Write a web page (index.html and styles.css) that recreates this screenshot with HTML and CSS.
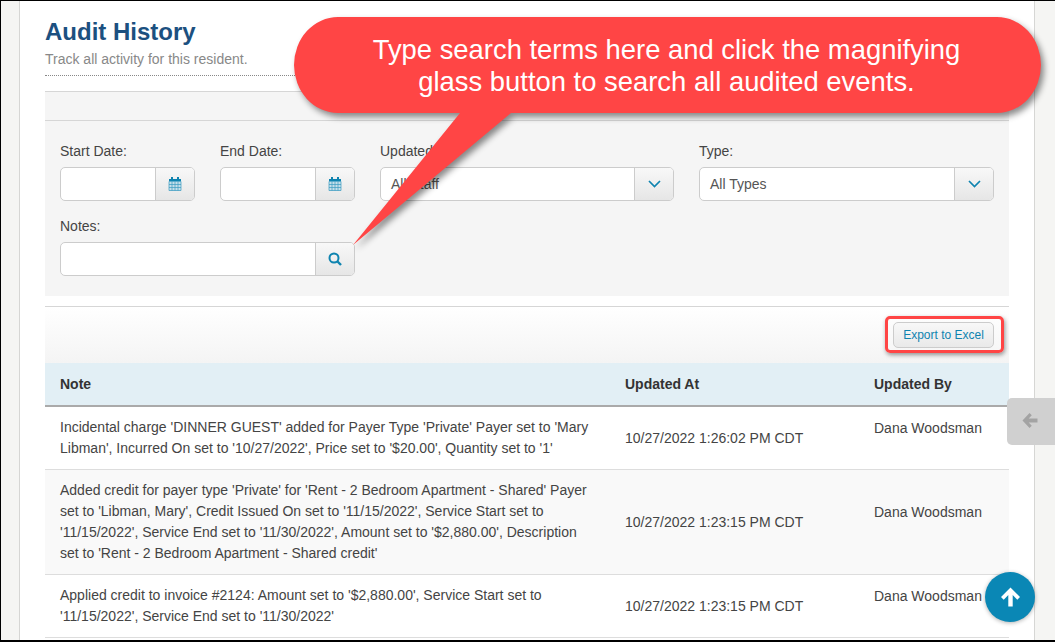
FILE: index.html
```html
<!DOCTYPE html>
<html lang="en">
<head>
  <meta charset="UTF-8">
  <title>Audit History</title>
  <link rel="stylesheet" href="styles.css">
</head>
<body>
  <div class="frame">
    <div class="page">
      <h1>Audit History</h1>
      <p class="subtitle">Track all activity for this resident.</p>
      <div class="dotted"></div>

      <div class="panel">
        <div class="panel-top"></div>
        <div class="filters">
          <div class="field">
            <label>Start Date:</label>
            <div class="input-group">
              <input type="text">
              <span class="addon addon-wide">
                <svg width="14" height="14" viewBox="0 0 14 14"><path d="M3 0h2v2H3zM9 0h2v2H9z" fill="#0f84b0"/><path d="M1 2h12v2H1z" fill="#0f84b0"/><path d="M1 4h12v10H1z" fill="#c5dfea"/><path d="M1 4.500h12V13.500H1zM4 4.500v9M7 4.500v9M10 4.500v9M1 7.500h12M1 10.500h12" fill="none" stroke="#3b9bc0" stroke-width=".7"/></svg>
              </span>
            </div>
          </div>
          <div class="field">
            <label>End Date:</label>
            <div class="input-group">
              <input type="text">
              <span class="addon addon-wide">
                <svg width="14" height="14" viewBox="0 0 14 14"><path d="M3 0h2v2H3zM9 0h2v2H9z" fill="#0f84b0"/><path d="M1 2h12v2H1z" fill="#0f84b0"/><path d="M1 4h12v10H1z" fill="#c5dfea"/><path d="M1 4.500h12V13.500H1zM4 4.500v9M7 4.500v9M10 4.500v9M1 7.500h12M1 10.500h12" fill="none" stroke="#3b9bc0" stroke-width=".7"/></svg>
              </span>
            </div>
          </div>
          <div class="field">
            <label>Updated By:</label>
            <div class="input-group">
              <div class="select-value">All Staff</div>
              <span class="addon addon-select">
                <svg width="13" height="8" viewBox="0 0 13 8"><path d="M1 1l5.500 5.500L12 1" fill="none" stroke="#0f84b0" stroke-width="1.700"/></svg>
              </span>
            </div>
          </div>
          <div class="field">
            <label>Type:</label>
            <div class="input-group">
              <div class="select-value">All Types</div>
              <span class="addon addon-select">
                <svg width="13" height="8" viewBox="0 0 13 8"><path d="M1 1l5.500 5.500L12 1" fill="none" stroke="#0f84b0" stroke-width="1.700"/></svg>
              </span>
            </div>
          </div>
          <div class="field field-notes">
            <label>Notes:</label>
            <div class="input-group">
              <input type="text">
              <span class="addon addon-wide">
                <svg width="14" height="14" viewBox="0 0 14 14"><circle cx="6" cy="6" r="4.500" fill="none" stroke="#0f84b0" stroke-width="2"/><path d="M9 9l4 4" stroke="#0f84b0" stroke-width="2.400"/></svg>
              </span>
            </div>
          </div>
        </div>
      </div>

      <div class="toolbar">
        <button class="btn-export">Export to Excel</button>
      </div>

      <table class="audit">
        <thead>
          <tr>
            <th class="col-note">Note</th>
            <th class="col-at">Updated At</th>
            <th class="col-by">Updated By</th>
          </tr>
        </thead>
        <tbody>
          <tr>
            <td>Incidental charge 'DINNER GUEST' added for Payer Type 'Private' Payer set to 'Mary Libman', Incurred On set to '10/27/2022', Price set to '$20.00', Quantity set to '1'</td>
            <td>10/27/2022 1:26:02 PM CDT</td>
            <td><span class="by">Dana Woodsman</span></td>
          </tr>
          <tr>
            <td>Added credit for payer type 'Private' for 'Rent - 2 Bedroom Apartment - Shared' Payer set to 'Libman, Mary', Credit Issued On set to '11/15/2022', Service Start set to '11/15/2022', Service End set to '11/30/2022', Amount set to '$2,880.00', Description set to 'Rent - 2 Bedroom Apartment - Shared credit'</td>
            <td>10/27/2022 1:23:15 PM CDT</td>
            <td><span class="by">Dana Woodsman</span></td>
          </tr>
          <tr>
            <td>Applied credit to invoice #2124: Amount set to '$2,880.00', Service Start set to '11/15/2022', Service End set to '11/30/2022'</td>
            <td>10/27/2022 1:23:15 PM CDT</td>
            <td><span class="by">Dana Woodsman</span></td>
          </tr>
        </tbody>
      </table>
    </div>

    <!-- annotations and floating buttons -->
    <div class="side-tab">
      <svg width="16" height="15" viewBox="0 0 16 15"><path d="M7.500 0L0.500 7.500l7 7.500 2.300-2.300-3.100-3.200H15.500V5.500H6.700L9.800 2.300z" fill="#a3a3a3"/></svg>
    </div>
    <div class="to-top">
      <svg width="21" height="20" viewBox="0 0 21 20"><path d="M10.500 0.500L1 10l2.700 2.700 4.600-4.600V19.500h4.400V8.100l4.600 4.600L20 10z" fill="#fff"/></svg>
    </div>
    <div class="export-ring"></div>
    <div class="callout">
      <svg class="callout-shape" width="1055" height="642" viewBox="0 0 1055 642">
        <path d="M338 17H997A44 48 0 0 1 1041 65A44 48 0 0 1 997 113H511L353 245L460 113H338A44 48 0 0 1 294 65A44 48 0 0 1 338 17Z" fill="#ff4545"/>
      </svg>
      <div class="callout-text">Type search terms here and click the magnifying<br>glass button to search all audited events.</div>
    </div>
  </div>
</body>
</html>
```

FILE: styles.css
```css
html, body {
  margin: 0;
  padding: 0;
  height: 642px;
  overflow: hidden;
}
body {
  font-family: "Liberation Sans", Arial, sans-serif;
  font-size: 14px;
  color: #444;
  background: #f5f5f3;
}
.frame {
  position: relative;
  box-sizing: border-box;
  height: 642px;
  border: solid #000;
  border-width: 1px 0 2px 1px;
  padding-left: 18px;
  overflow: hidden;
}
.page {
  box-sizing: border-box;
  width: 1016px;
  height: 100%;
  background: #fff;
  border-left: 1px solid #d6d6d4;
  border-right: 1px solid #d6d6d4;
  padding: 0 25px;
}
h1 {
  margin: 0;
  padding-top: 17px;
  font-size: 24px;
  line-height: 28px;
  font-weight: bold;
  color: #1c5080;
}
.subtitle {
  margin: 3px 0 0;
  line-height: 20px;
  color: #888;
}
.dotted {
  margin-top: 6px;
  border-top: 1px dotted #888;
}
.panel {
  margin-top: 15px;
  background: #f5f5f5;
  border-top: 1px solid #d6d6d6;
}
.panel-top {
  height: 28px;
  border-bottom: 1px solid #d6d6d6;
}
.filters {
  display: grid;
  grid-template-columns: 135px 135px 294px 295px;
  column-gap: 25px;
  row-gap: 15px;
  padding: 20px 15px 20px;
}
.field label {
  display: block;
  line-height: 20px;
  margin-bottom: 6px;
  color: #444;
}
.field-notes {
  grid-column: 1 / 3;
}
.input-group {
  display: flex;
  box-sizing: border-box;
  height: 34px;
  background: #fff;
  border: 1px solid #ccc;
  border-radius: 5px;
  overflow: hidden;
}
.input-group input {
  flex: 1;
  min-width: 0;
  border: 0;
  padding: 0 10px;
  background: transparent;
}
.select-value {
  flex: 1;
  padding-left: 10px;
  line-height: 32px;
  color: #555;
}
.addon {
  display: flex;
  align-items: center;
  justify-content: center;
  border-left: 1px solid #ccc;
  background: linear-gradient(#f8f8f8, #e6e6e6);
}
.addon-wide {
  width: 38px;
}
.addon-select {
  width: 38px;
}
.toolbar {
  display: flex;
  justify-content: flex-end;
  align-items: flex-start;
  box-sizing: border-box;
  height: 57px;
  margin-top: 10px;
  padding: 15px 15px 0 0;
  border-top: 1px solid #d6d6d6;
  background: linear-gradient(#fff, #f4f4f4);
}
.btn-export {
  box-sizing: border-box;
  width: 101px;
  height: 26px;
  padding: 0;
  font-family: "Liberation Sans", Arial, sans-serif;
  font-size: 12px;
  color: #0f84b0;
  background: linear-gradient(#f8f8f8, #e9e9e9);
  border: 1px solid #ccc;
  border-radius: 5px;
}
.audit {
  width: 964px;
  border-collapse: separate;
  border-spacing: 0;
  table-layout: fixed;
}
.audit th {
  box-sizing: border-box;
  height: 44px;
  padding: 0 15px;
  text-align: left;
  font-size: 14px;
  color: #333;
  background: #e2eff5;
  border-bottom: 2px solid #aaa;
}
.col-note { width: 565px; }
.col-at { width: 249px; }
.col-by { width: 150px; }
.audit td {
  padding: 10px 15px;
  line-height: 21px;
  vertical-align: middle;
  border-bottom: 1px solid #ddd;
}
.audit tbody tr:nth-child(even) td {
  background: #f9f9f9;
}
.by {
  display: block;
  padding-bottom: 19px;
}
.export-ring {
  position: absolute;
  left: 884px;
  top: 315px;
  box-sizing: border-box;
  width: 119px;
  height: 37px;
  border: 3px solid #ff4545;
  border-radius: 5px;
  box-shadow: 1px 2px 4px rgba(0,0,0,0.4);
}
.side-tab {
  position: absolute;
  left: 1006px;
  top: 397px;
  display: flex;
  align-items: center;
  padding: 0 0 2px 15px;
  box-sizing: border-box;
  width: 48px;
  height: 47px;
  background: #d0d0d0;
  border-radius: 5px 0 0 5px;
}
.to-top {
  position: absolute;
  left: 984px;
  top: 571px;
  display: flex;
  align-items: center;
  justify-content: center;
  width: 50px;
  height: 50px;
  border-radius: 50%;
  background: #0a87b5;
  box-shadow: 0 1px 4px rgba(0,0,0,0.3);
}
.callout {
  position: absolute;
  left: -1px;
  top: -1px;
  width: 1055px;
  height: 642px;
  pointer-events: none;
}
.callout-shape {
  display: block;
  filter: drop-shadow(3px 4px 3px rgba(0,0,0,0.45));
}
.callout-text {
  position: absolute;
  left: 293px;
  top: 34px;
  width: 747px;
  text-align: center;
  font-size: 27.4px;
  line-height: 32px;
  color: #fff;
}
```
